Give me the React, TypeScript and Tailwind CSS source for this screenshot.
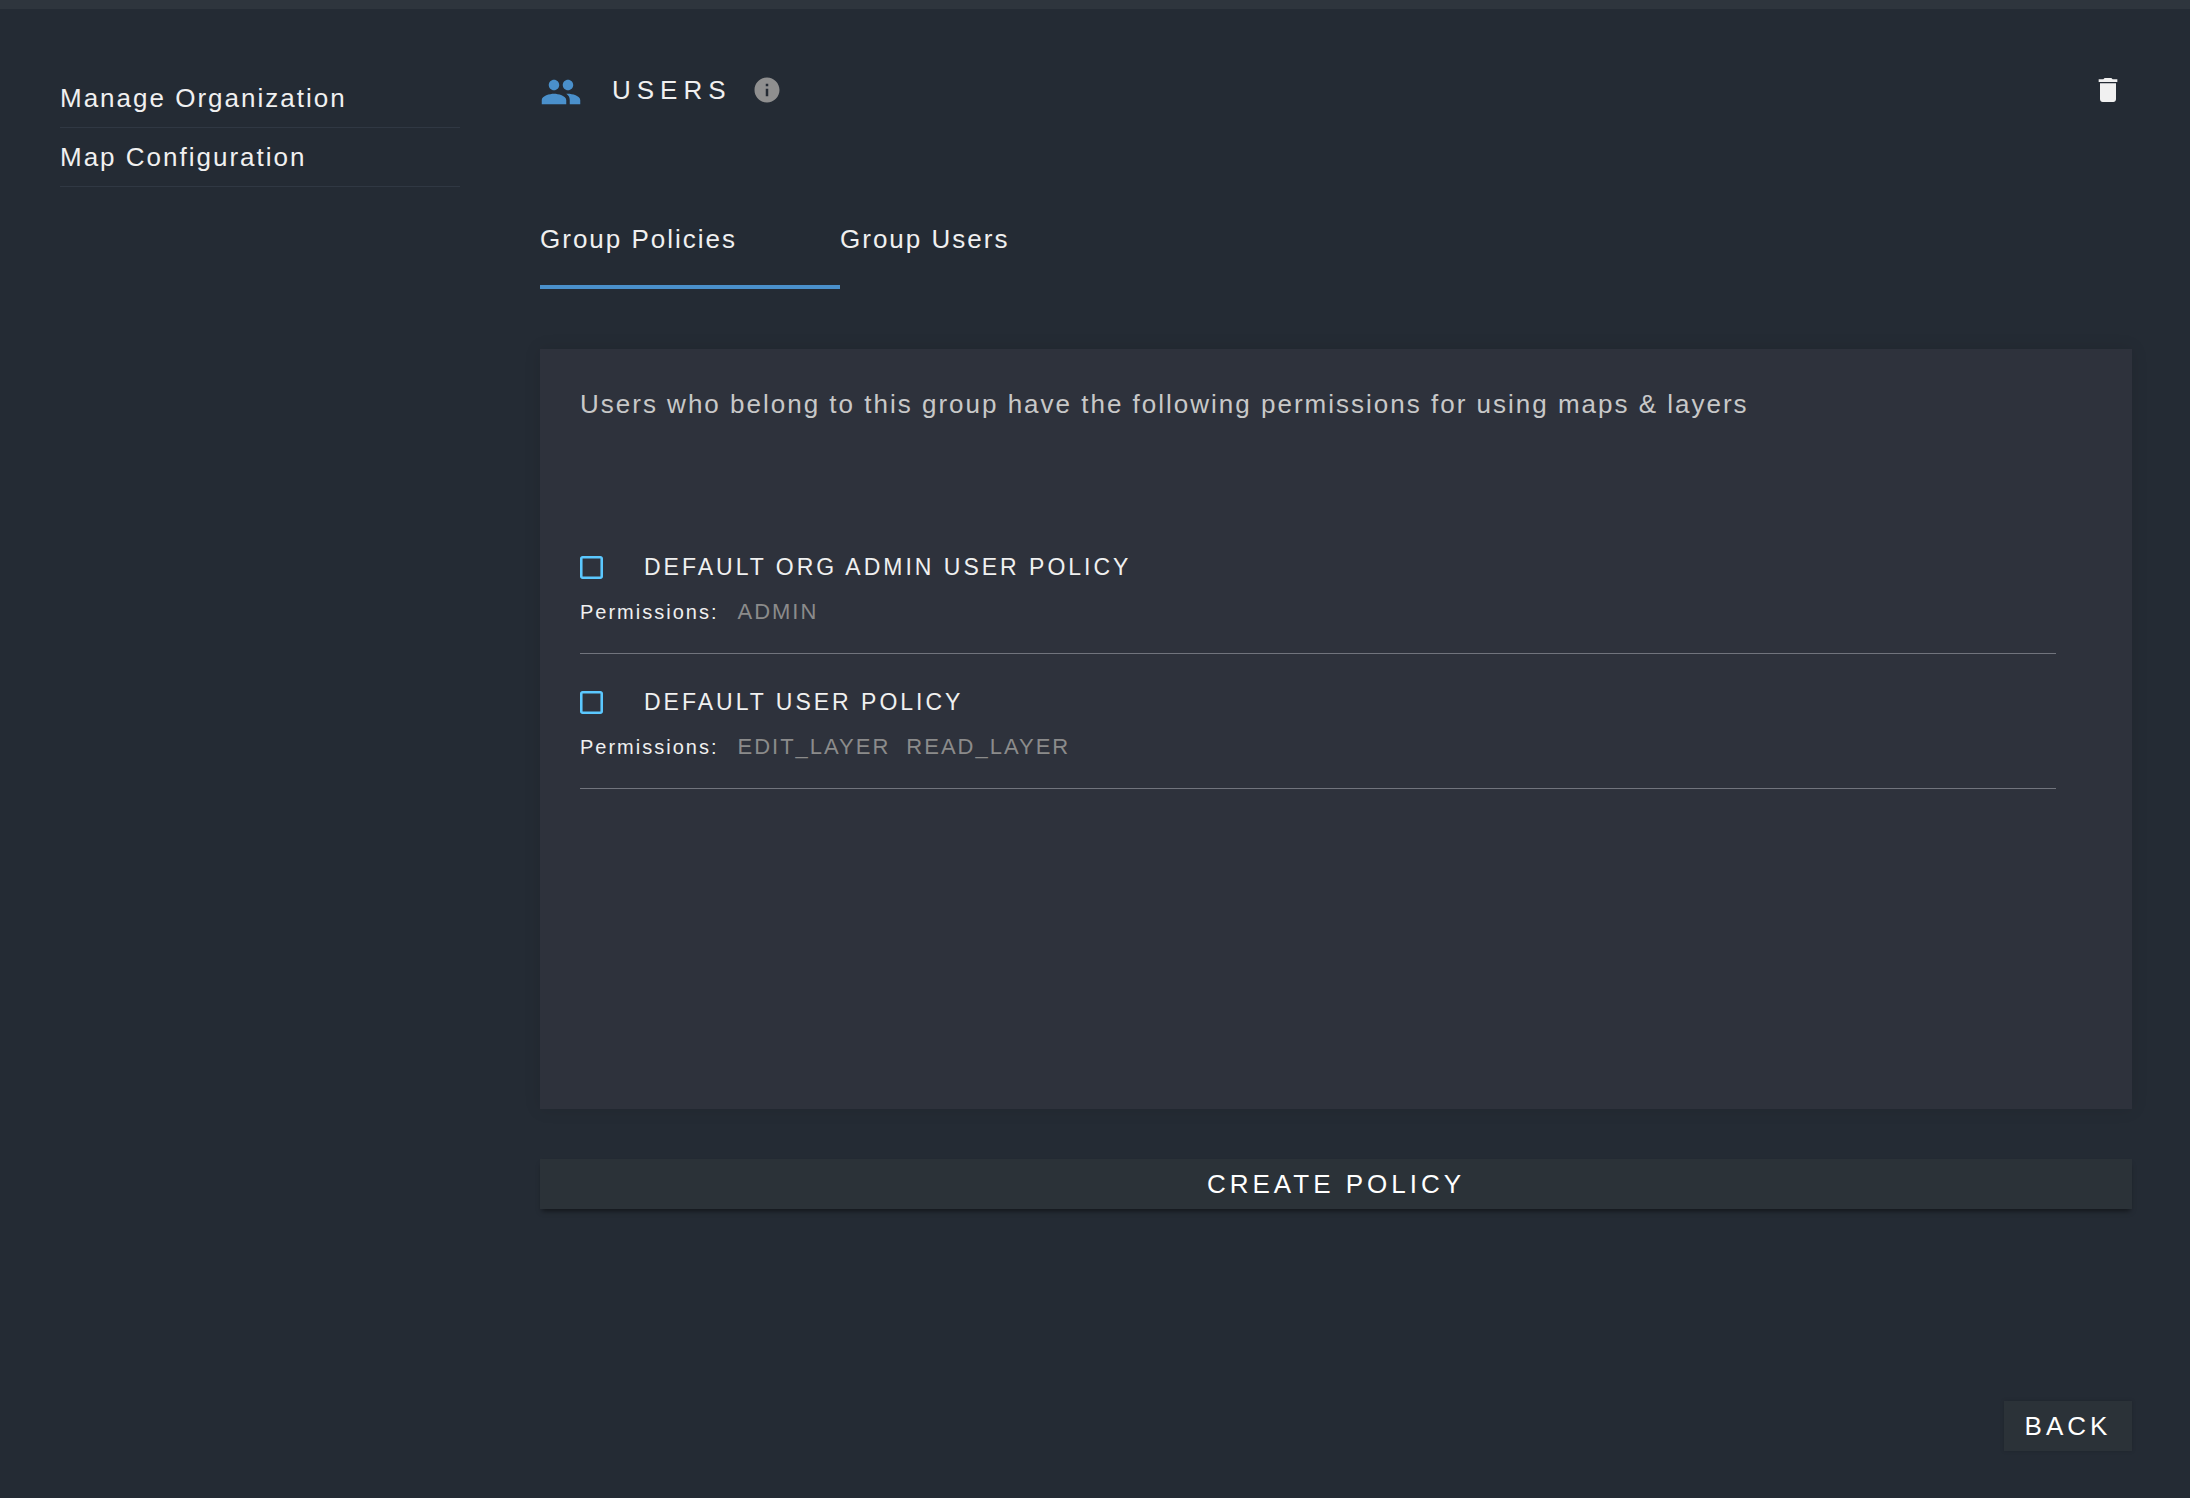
import { MdDelete, MdInfo, MdPeople } from "react-icons/md";

const navLinks = ["Manage Organization", "Map Configuration"];

const policies = [
  { id: "org-admin", name: "DEFAULT ORG ADMIN USER POLICY", permissions: ["ADMIN"] },
  { id: "default-user", name: "DEFAULT USER POLICY", permissions: ["EDIT_LAYER", "READ_LAYER"] },
];

function Sidebar() {
  return (
    <nav aria-label="Settings" className="w-[400px] shrink-0 pt-[60px]">
      <ul>
        {navLinks.map((label) => (
          <li key={label} className="border-b border-[#303843]">
            <a href="#" className="block py-[11px] text-[26px] leading-9 tracking-[2px]">
              {label}
            </a>
          </li>
        ))}
      </ul>
    </nav>
  );
}

function PolicyRow({ id, name, permissions }: (typeof policies)[number]) {
  return (
    <li className="border-b border-[#71747d] pt-[34px] pb-[27px]">
      <div className="flex items-center">
        <span className="grid">
          <input
            id={id}
            type="checkbox"
            className="peer col-start-1 row-start-1 size-[23px] appearance-none rounded-[3px] checked:bg-[#5bc5fa]"
          />
          <svg
            aria-hidden="true"
            viewBox="3 3 18 18"
            className="pointer-events-none col-start-1 row-start-1 size-[23px] fill-[#5bc8ff]"
          >
            <path d="M19 5v14H5V5h14m0-2H5c-1.1 0-2 .9-2 2v14c0 1.1.9 2 2 2h14c1.1 0 2-.9 2-2V5c0-1.1-.9-2-2-2z" />
          </svg>
        </span>
        <label htmlFor={id} className="pl-[41px] text-[23px] leading-7 tracking-[3px]">
          {name}
        </label>
      </div>
      <div className="flex items-baseline pt-[17px] leading-7">
        <span className="text-[20px] tracking-[2px]">Permissions:</span>
        <ul className="flex gap-4 pl-[19px] text-[22px] tracking-[2px] text-[#8b8b8b]">
          {permissions.map((p) => (
            <li key={p}>{p}</li>
          ))}
        </ul>
      </div>
    </li>
  );
}

export default function App() {
  return (
    <div className="flex min-h-screen flex-col border-t-[9px] border-[#2e353d] bg-[#242b34] font-['Liberation_Sans',Arial,sans-serif] text-[#f0f0f0]">
      <div className="flex grow gap-20 pr-[58px] pl-[60px]">
        <Sidebar />
        <main className="flex min-w-0 grow flex-col">
          <header className="flex items-center pt-[58px]">
            <MdPeople className="mt-1 size-[42px] text-[#4a90cb]" />
            <h1 className="pl-[30px] text-[26px] leading-[42px] tracking-[6px]">USERS</h1>
            <button type="button" aria-label="About users" className="ml-5 text-[#8f8f8f]">
              <MdInfo className="size-[30px]" />
            </button>
            <button type="button" aria-label="Delete group" className="mr-2 ml-auto">
              <MdDelete className="size-8" />
            </button>
          </header>

          <div role="tablist" className="mt-[91px] flex text-[26px] leading-[70px] tracking-[2px]">
            <button type="button" role="tab" aria-selected="true" className="w-[300px] border-b-4 border-[#4a90cb] pb-[11px] text-left">
              Group Policies
            </button>
            <button type="button" role="tab" aria-selected="false" className="w-[300px] border-b-4 border-transparent pb-[11px] text-left">
              Group Users
            </button>
          </div>

          <section className="mt-[60px] min-h-[760px] bg-[#2e323c] pt-[39px] pr-[76px] pl-10 shadow-[0_0_16px_rgba(0,0,0,0.1)]">
            <p className="text-[26px] leading-8 tracking-[2px] text-[#c8c8c8]">
              Users who belong to this group have the following permissions for using maps &amp; layers
            </p>
            <ul className="mt-[99px]">
              {policies.map((policy) => (
                <PolicyRow key={policy.id} {...policy} />
              ))}
            </ul>
          </section>

          <button
            type="button"
            className="mt-[50px] h-[50px] bg-[#2b3238] text-[26px] tracking-[4px] text-white shadow-[0_4px_5px_-2px_rgba(0,0,0,0.5)]"
          >
            CREATE POLICY
          </button>
          <button
            type="button"
            className="mt-auto mb-[47px] h-[50px] w-32 self-end bg-[#2b3238] text-[26px] tracking-[4px] text-white shadow-[0_0_4px_rgba(0,0,0,0.15)]"
          >
            BACK
          </button>
        </main>
      </div>
    </div>
  );
}
